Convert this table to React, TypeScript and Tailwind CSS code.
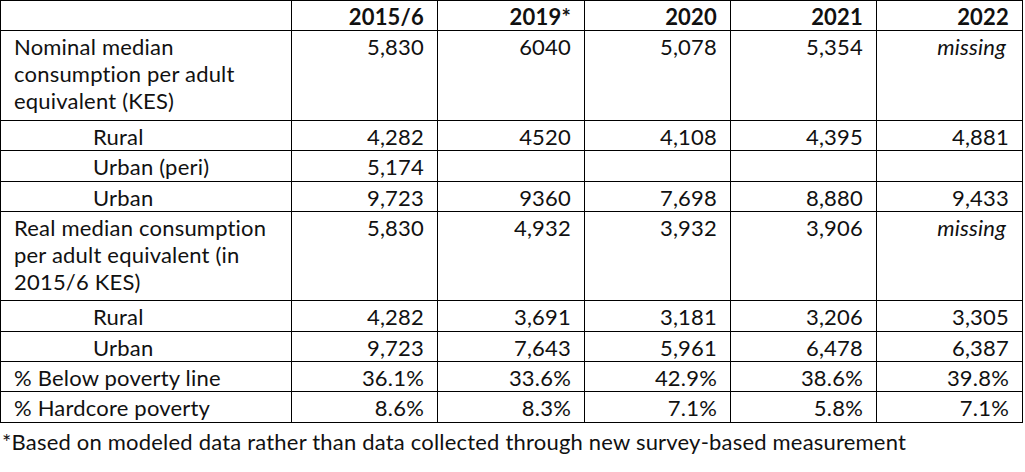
const years = ['2015/6', '2019*', '2020', '2021', '2022']

type Row = { label: string; indent?: boolean; h: string; values: string[] }

const rows: Row[] = [
  {
    label: 'Nominal median consumption per adult equivalent (KES)',
    h: 'h-[90px]',
    values: ['5,830', '6040', '5,078', '5,354', 'missing'],
  },
  { label: 'Rural', indent: true, h: 'h-[30px]', values: ['4,282', '4520', '4,108', '4,395', '4,881'] },
  { label: 'Urban (peri)', indent: true, h: 'h-[31px]', values: ['5,174', '', '', '', ''] },
  { label: 'Urban', indent: true, h: 'h-[30px]', values: ['9,723', '9360', '7,698', '8,880', '9,433'] },
  {
    label: 'Real median consumption per adult equivalent (in 2015/6 KES)',
    h: 'h-[89px]',
    values: ['5,830', '4,932', '3,932', '3,906', 'missing'],
  },
  { label: 'Rural', indent: true, h: 'h-[31px]', values: ['4,282', '3,691', '3,181', '3,206', '3,305'] },
  { label: 'Urban', indent: true, h: 'h-[30px]', values: ['9,723', '7,643', '5,961', '6,478', '6,387'] },
  { label: '% Below poverty line', h: 'h-[30px]', values: ['36.1%', '33.6%', '42.9%', '38.6%', '39.8%'] },
  { label: '% Hardcore poverty', h: 'h-[31px]', values: ['8.6%', '8.3%', '7.1%', '5.8%', '7.1%'] },
]

export default function App() {
  return (
    <div className="bg-white w-[1025px] h-[472px] text-[22px] leading-[27px] tracking-[0.2px] text-[#111]" style={{ fontFamily: 'Lato, "Open Sans", sans-serif' }}>
      <table className="table-fixed border-collapse w-[1022px]">
        <colgroup>
          <col className="w-[291px]" />
          <col className="w-[146px]" />
          <col className="w-[147px]" />
          <col className="w-[146px]" />
          <col className="w-[146px]" />
          <col className="w-[146px]" />
        </colgroup>
        <thead>
          <tr className="h-[30px]">
            <th className="border border-black p-0" />
            {years.map(y => (
              <th key={y} className="border border-black align-top pt-[2px] pr-[13px] text-right font-bold">
                {y}
              </th>
            ))}
          </tr>
        </thead>
        <tbody>
          {rows.map((r, i) => (
            <tr key={i} className={r.h}>
              <td className={`border border-black align-top pt-[2px] pr-[8px] ${r.indent ? 'pl-[92px]' : 'pl-[13px]'}`}>
                {r.label}
              </td>
              {r.values.map((v, j) => (
                <td key={j} className={`border border-black align-top pt-[2px] pr-[13px] text-right ${v === 'missing' ? 'italic pr-[16px]' : ''}`}>
                  {v}
                </td>
              ))}
            </tr>
          ))}
        </tbody>
      </table>
      <p className="pl-[2px] pt-[5px]">*Based on modeled data rather than data collected through new survey-based measurement</p>
    </div>
  )
}
